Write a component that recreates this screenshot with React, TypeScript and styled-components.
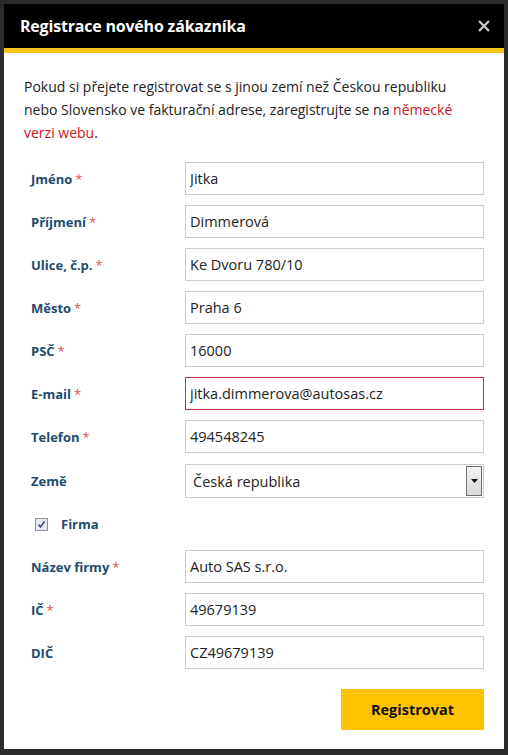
import React from 'react';
import styled, { createGlobalStyle } from 'styled-components';

const Colors = {
  black: '#000000',
  yellow: '#f5c518',
  label: '#1d4c6e',
  star: '#d9534f',
  text: '#222222',
  link: '#c8161d',
  border: '#cccccc',
  error: '#c9343a',
};

const GlobalStyle = createGlobalStyle`
  html, body {
    margin: 0;
    padding: 0;
    background: #2b2b2b;
  }
  body {
    font-family: "Open Sans", "Noto Sans", sans-serif;
  }
`;

const Overlay = styled.div`
  padding: 4px;
  min-height: 100vh;
  box-sizing: border-box;
`;

const Modal = styled.div`
  width: 500px;
  background: #fff;
`;

const Header = styled.div`
  display: flex;
  align-items: center;
  justify-content: space-between;
  height: 44px;
  padding: 0 10px 0 16px;
  background: ${Colors.black};
  border-bottom: 5px solid ${Colors.yellow};
`;

const Title = styled.h4`
  margin: 0;
  color: #fff;
  font-size: 16px;
  font-weight: 700;
  letter-spacing: -0.2px;
`;

const CloseButton = styled.button`
  display: flex;
  align-items: center;
  justify-content: center;
  width: 20px;
  height: 20px;
  padding: 0;
  border: none;
  background: none;
  cursor: pointer;
`;

const Body = styled.div`
  padding: 22px 20px 19px 20px;
`;

const Intro = styled.p`
  margin: 0 0 18px 0;
  color: ${Colors.text};
  font-size: 14px;
  line-height: 23px;

  & > a {
    color: ${Colors.link};
    text-decoration: none;
  }
`;

const Form = styled.form`
  display: flex;
  flex-direction: column;
  gap: 10px;
  padding-left: 7px;
`;

const Row = styled.div`
  display: flex;
  align-items: center;
`;

const Label = styled.label`
  width: 154px;
  flex-shrink: 0;
  color: ${Colors.label};
  font-size: 13px;
  font-weight: 700;

  & > span {
    color: ${Colors.star};
    margin-left: 3px;
    font-weight: 400;
  }
`;

const FieldBox = styled.div<{ $invalid?: boolean }>`
  flex: 1;
  display: flex;
  height: 33px;
  box-sizing: border-box;
  border: 1px solid ${({ $invalid }) => ($invalid ? Colors.error : Colors.border)};
  background: #fff;
`;

const Input = styled.input`
  flex: 1;
  min-width: 0;
  padding: 0 4px;
  border: none;
  background: transparent;
  font-family: inherit;
  font-size: 14.5px;
  color: ${Colors.text};
  outline: none;
`;

const SelectBox = styled.div`
  flex: 1;
  display: flex;
  align-items: center;
  justify-content: space-between;
  height: 34px;
  margin-top: 1px;
  box-sizing: border-box;
  padding: 0 1px 0 7px;
  border: 1px solid ${Colors.border};
  font-size: 14.5px;
  color: ${Colors.text};
`;

const SelectArrow = styled.div`
  display: flex;
  align-items: center;
  justify-content: center;
  width: 14px;
  height: 28px;
  border: 1px solid #707070;
  background: linear-gradient(#f4f4f4, #d8d8d8);
`;

const CheckRow = styled.div`
  display: flex;
  align-items: center;
  gap: 13px;
  height: 32px;
  padding-left: 4px;
`;

const CheckBox = styled.div`
  display: flex;
  align-items: center;
  justify-content: center;
  width: 11px;
  height: 11px;
  border: 1px solid #8f8f9d;
  background: #e8e8ef;
`;

const CheckLabel = styled.span`
  color: ${Colors.label};
  font-size: 13px;
  font-weight: 700;
`;

const Footer = styled.div`
  display: flex;
  justify-content: flex-end;
  margin-top: 10px;
`;

const SubmitButton = styled.button`
  width: 143px;
  height: 41px;
  border: none;
  background: #fdc300;
  color: #111;
  font-family: inherit;
  font-size: 14.5px;
  font-weight: 700;
  cursor: pointer;
`;

const fields = [
  { label: 'Jméno', value: 'Jitka', required: true },
  { label: 'Příjmení', value: 'Dimmerová', required: true },
  { label: 'Ulice, č.p.', value: 'Ke Dvoru 780/10', required: true },
  { label: 'Město', value: 'Praha 6', required: true },
  { label: 'PSČ', value: '16000', required: true },
  { label: 'E-mail', value: 'jitka.dimmerova@autosas.cz', required: true, invalid: true },
  { label: 'Telefon', value: '494548245', required: true },
];

const companyFields = [
  { label: 'Název firmy', value: 'Auto SAS s.r.o.', required: true },
  { label: 'IČ', value: '49679139', required: true },
  { label: 'DIČ', value: 'CZ49679139', required: false },
];

type Field = { label: string; value: string; required: boolean; invalid?: boolean };

const FieldRow: React.FC<{ field: Field }> = ({ field }) => (
  <Row>
    <Label>
      {field.label}
      {field.required && <span>*</span>}
    </Label>
    <FieldBox $invalid={field.invalid}>
      <Input defaultValue={field.value} />
    </FieldBox>
  </Row>
);

const App: React.FC = () => (
  <>
    <GlobalStyle />
    <Overlay>
      <Modal>
        <Header>
          <Title>Registrace nového zákazníka</Title>
          <CloseButton aria-label="Zavřít">
            <svg width="12" height="12" viewBox="0 0 12 12">
              <path d="M1 1L11 11M11 1L1 11" stroke="#c8c8c8" strokeWidth="2.4" />
            </svg>
          </CloseButton>
        </Header>
        <Body>
          <Intro>
            Pokud si přejete registrovat se s jinou zemí než Českou republiku
            <br />
            nebo Slovensko ve fakturační adrese, zaregistrujte se na <a href="#">německé
            <br />
            verzi webu</a>.
          </Intro>
          <Form onSubmit={(e) => e.preventDefault()}>
            {fields.map((f) => (
              <FieldRow key={f.label} field={f} />
            ))}
            <Row>
              <Label>Země</Label>
              <SelectBox>
                Česká republika
                <SelectArrow>
                  <svg width="7" height="4" viewBox="0 0 7 4">
                    <path d="M0 0H7L3.5 4Z" fill="#111" />
                  </svg>
                </SelectArrow>
              </SelectBox>
            </Row>
            <CheckRow>
              <CheckBox>
                <svg width="9" height="9" viewBox="0 0 9 9">
                  <path d="M1.5 4.5L3.5 7L7.5 1.5" stroke="#3b4a7a" strokeWidth="1.4" fill="none" />
                </svg>
              </CheckBox>
              <CheckLabel>Firma</CheckLabel>
            </CheckRow>
            {companyFields.map((f) => (
              <FieldRow key={f.label} field={f} />
            ))}
            <Footer>
              <SubmitButton type="submit">Registrovat</SubmitButton>
            </Footer>
          </Form>
        </Body>
      </Modal>
    </Overlay>
  </>
);

export default App;
